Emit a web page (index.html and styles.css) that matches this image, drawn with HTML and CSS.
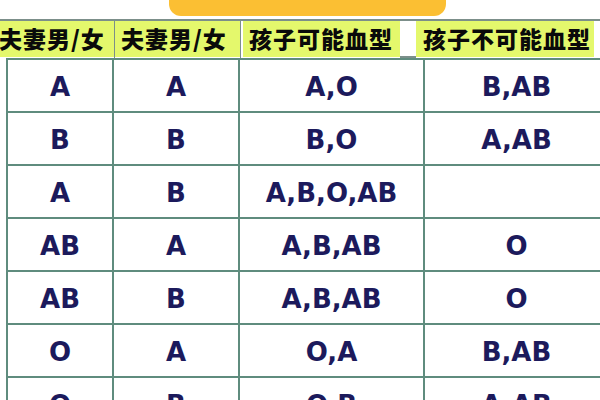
FILE: index.html
```html
<!DOCTYPE html>
<html lang="zh">
<head>
<meta charset="utf-8">
<link rel="stylesheet" href="styles.css">
</head>
<body>
<div class="page">
  <div class="tab"></div>
  <div class="head">
    <div class="h h1">夫妻男/女</div>
    <div class="vl"></div>
    <div class="h h2">夫妻男/女</div>
    <div class="vl"></div>
    <div class="h h3">孩子可能血型</div>
    <div class="gap"></div>
    <div class="h h4">孩子不可能血型</div>
  </div>
  <div class="rows">
    <div class="row"><div class="c c1">A</div><div class="c c2">A</div><div class="c c3">A,O</div><div class="c c4">B,AB</div></div>
    <div class="row"><div class="c c1">B</div><div class="c c2">B</div><div class="c c3">B,O</div><div class="c c4">A,AB</div></div>
    <div class="row"><div class="c c1">A</div><div class="c c2">B</div><div class="c c3">A,B,O,AB</div><div class="c c4"></div></div>
    <div class="row"><div class="c c1">AB</div><div class="c c2">A</div><div class="c c3">A,B,AB</div><div class="c c4">O</div></div>
    <div class="row"><div class="c c1">AB</div><div class="c c2">B</div><div class="c c3">A,B,AB</div><div class="c c4">O</div></div>
    <div class="row"><div class="c c1">O</div><div class="c c2">A</div><div class="c c3">O,A</div><div class="c c4">B,AB</div></div>
    <div class="row"><div class="c c1">O</div><div class="c c2">B</div><div class="c c3">O,B</div><div class="c c4">A,AB</div></div>
  </div>
</div>
</body>
</html>
```
FILE: styles.css
```css
html, body {
  margin: 0;
  padding: 0;
  background: #ffffff;
}
.page {
  width: 600px;
  height: 400px;
  overflow: hidden;
  position: relative;
}
.tab {
  margin-left: 169px;
  width: 277px;
  height: 16px;
  background: #fbbf33;
  border-radius: 0 0 12px 12px;
}
.head {
  margin-top: 3px;
  display: flex;
  height: 37px;
  border-top: 2px solid #7c8f8a;
}
.h {
  background: #e4f86c;
  color: #0a0a0a;
  font-family: "Noto Sans CJK SC", sans-serif;
  font-weight: 900;
  font-size: 23px;
  letter-spacing: 1px;
  line-height: 35px;
  white-space: nowrap;
  overflow: hidden;
  height: 36px;
}
.h1 { width: 114px; text-indent: -1px; }
.h2 { width: 125px; padding-left: 6px; box-sizing: border-box; }
.h3 { width: 157px; margin-left: 2px; padding-left: 6px; box-sizing: border-box; }
.h4 { width: 178px; padding-left: 7px; box-sizing: border-box; }
.vl {
  width: 1px;
  background: #7c8f8a;
}
.gap {
  width: 16px;
  height: 35px;
  border-bottom: 2px solid #7c8f8a;
}
.rows {
  display: flex;
  flex-direction: column;
}
.row {
  display: grid;
  grid-template-columns: 114px 126px 185px 185px;
  height: 53px;
}
.c {
  border-top: 2px solid #5f8c7e;
  border-right: 2px solid #5f8c7e;
  display: flex;
  align-items: center;
  justify-content: center;
  font-family: "DejaVu Sans", sans-serif;
  font-weight: bold;
  font-size: 26px;
  color: #1c1a5c;
  padding-top: 2px;
}
.c1 {
  margin-left: 6px;
  border-left: 2px solid #5f8c7e;
}
```
